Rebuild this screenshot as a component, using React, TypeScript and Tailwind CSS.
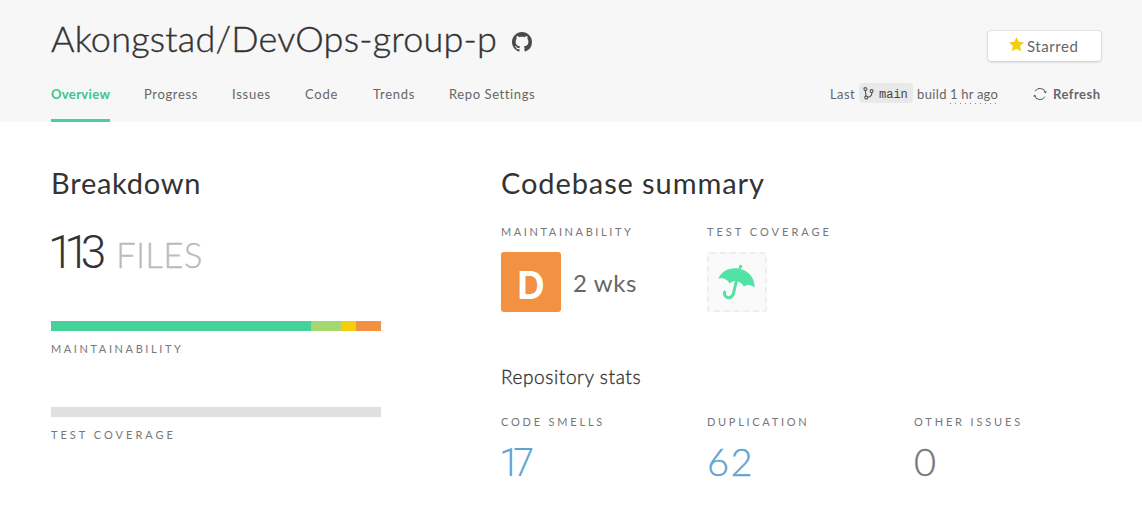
import React from "react";

const tabs = [
  { label: "Overview", active: true, spacing: "tracking-[0.35px]", width: "w-[59px]" },
  { label: "Progress", active: false, spacing: "tracking-[0.65px]", width: "w-[54px]" },
  { label: "Issues", active: false, spacing: "tracking-[0.75px]", width: "w-[39px]" },
  { label: "Code", active: false, spacing: "tracking-[0.8px]", width: "w-[34px]" },
  { label: "Trends", active: false, spacing: "tracking-[0.75px]", width: "w-[42px]" },
  { label: "Repo Settings", active: false, spacing: "tracking-[0.6px]", width: "w-[86px]" },
];

function GithubMark() {
  return (
    <svg viewBox="0 0 16 16" className="h-5 w-5" fill="#4a4a4a" aria-label="GitHub">
      <path d="M8 0C3.58 0 0 3.58 0 8c0 3.54 2.29 6.53 5.47 7.59.4.07.55-.17.55-.38 0-.19-.01-.82-.01-1.49-2.01.37-2.53-.49-2.69-.94-.09-.23-.48-.94-.82-1.13-.28-.15-.68-.52-.01-.53.63-.01 1.08.58 1.23.82.72 1.21 1.87.87 2.33.66.07-.52.28-.87.51-1.07-1.78-.2-3.64-.89-3.64-3.95 0-.87.31-1.59.82-2.15-.08-.2-.36-1.02.08-2.12 0 0 .67-.21 2.2.82.64-.18 1.32-.27 2-.27s1.36.09 2 .27c1.53-1.04 2.2-.82 2.2-.82.44 1.1.16 1.92.08 2.12.51.56.82 1.27.82 2.15 0 3.07-1.87 3.75-3.65 3.95.29.25.54.73.54 1.48 0 1.07-.01 1.93-.01 2.2 0 .21.15.46.55.38A8.01 8.01 0 0 0 16 8c0-4.42-3.58-8-8-8Z" />
    </svg>
  );
}

function BranchIcon() {
  return (
    <svg viewBox="0 0 11 13" className="h-[13px] w-[11px]" fill="none" stroke="#555" strokeWidth="1.1">
      <circle cx="2.4" cy="2.1" r="1.5" />
      <circle cx="3.2" cy="10.6" r="1.5" />
      <circle cx="8.600" cy="4.1" r="1.5" />
      <path d="M2.4 3.600l.5 5.500M8.900 5.600c0 3.400-1.900 4.400-4.300 4.700" />
    </svg>
  );
}

function RefreshIcon() {
  return (
    <svg viewBox="0 0 14 14" className="h-[14px] w-[14px]" fill="none" stroke="#555" strokeWidth="1">
      <path d="M2.100 4.300A5.600 5.600 0 0 1 12.500 5.800M11.900 9.700A5.600 5.600 0 0 1 1.500 8.200" />
      <path d="M10.600 4.600h3.300l-1.300 1.900zM.1 9.400h3.300L1.500 7.500z" fill="#555" stroke="none" />
    </svg>
  );
}

function Star() {
  return (
    <svg viewBox="0 0 14 14" className="h-[15px] w-[15px]" fill="#f3ce0b">
      <path d="M7 0l2.050 4.450 4.950.6-3.650 3.350.95 4.900L7 10.900l-4.300 2.400.95-4.900L0 5.050l4.950-.6z" />
    </svg>
  );
}

function Umbrella() {
  return (
    <svg viewBox="0 0 38 36" className="h-9 w-[38px] shrink-0" fill="#50e3a4">
      <circle cx="22.6" cy="2.4" r="1.6" />
      <path d="M21.2 3l1.9.5-.5 2.2-2-.4z" />
      <path d="M.4 14.800C3.500 7 12 3 21.500 4.800 31 6.800 37 14.500 36.600 23.800 33.800 20.600 29.600 20 25.800 22.600 24.500 19.700 21.800 17.700 18.200 17.100 15.200 16.600 13.200 17.800 11.800 19.800 9.500 15.300 5 13.400.4 14.800z" />
      <path d="M18.400 17l-3 12.700c-.7 3-3 4.500-5.600 3.900-2.700-.6-3.800-2.900-3.100-5.500" fill="none" stroke="#50e3a4" strokeWidth="3" strokeLinecap="round" />
    </svg>
  );
}

function Caption({ children, className }: { children: string; className: string }) {
  return <div className={`h-4 text-[11px] leading-4 whitespace-nowrap text-[#777] uppercase ${className}`}>{children}</div>;
}

export default function App() {
  return (
    <div className="h-[514px] w-[1142px] overflow-hidden bg-white font-['Lato','Open_Sans',sans-serif] text-[#333]">
      <header className="h-[122px] bg-[#f7f7f7] pr-[41px] pl-[51px]">
        <div className="flex h-[80px] justify-between">
          <div className="flex items-start">
            <h1 className="w-[461px] pt-[16px] text-[36px] leading-[44px] font-light tracking-[0.2px] whitespace-nowrap [-webkit-text-stroke:0.4px_#333]">
              Akongstad/DevOps-group-p
            </h1>
            <div className="pt-8">
              <GithubMark />
            </div>
          </div>
          <button className="mt-[31px] flex h-[30px] w-[113px] rounded-[3px] bg-white pl-[21px] text-[#666] shadow-[0_0_2px_rgba(0,0,0,0.2),0_1px_3px_rgba(0,0,0,0.15)]">
            <span className="mt-[6px]">
              <Star />
            </span>
            <span className="ml-[3px] text-[15px] leading-[31px] tracking-[0.55px]">Starred</span>
          </button>
        </div>
        <div className="flex h-[42px] justify-between text-[13px] leading-[28px] text-[#666]">
          <nav className="flex gap-[34px]">
            {tabs.map((t) => (
              <a
                key={t.label}
                className={`whitespace-nowrap ${t.width} ${t.spacing} ${t.active ? "border-b-[3px] border-[#45d298] font-bold text-[#3bc48c]" : ""}`}
              >
                {t.label}
              </a>
            ))}
          </nav>
          <div className="flex whitespace-nowrap">
            <span className="w-[29px] tracking-[0.4px]">Last</span>
            <span className="mt-[3px] flex h-5 w-[54px] items-center rounded-[4px] bg-[#e9e9e9] pl-[4px] font-['Liberation_Mono',monospace] text-[12px] leading-5 text-[#444]">
              <BranchIcon />
              <span className="ml-[5px] pt-[3px]">main</span>
            </span>
            <span className="ml-1 w-[33px] tracking-[0.4px]">build</span>
            <span className="h-[24px] w-[48px] bg-[repeating-linear-gradient(90deg,#888_0_1px,transparent_1px_5px)] bg-[length:100%_1px] bg-bottom bg-no-repeat tracking-[0.2px]">1 hr ago</span>
            <span className="mt-[7px] ml-[35px] w-5">
              <RefreshIcon />
            </span>
            <span className="w-[48px] font-bold tracking-[0.5px]">Refresh</span>
          </div>
        </div>
      </header>

      <main className="flex pl-[51px]">
        <section className="w-[450px] pt-[41px]">
          <h2 className="text-[29px] leading-10 tracking-[0.75px]">Breakdown</h2>
          <div className="mt-[21px] flex h-[56px] items-baseline">
            <span className="ml-[-3px] w-[68px] font-['Roboto',sans-serif] text-[46px] leading-[56px] font-light tracking-[-9.2px]">113</span>
            <span className="text-[35px] leading-[56px] font-light tracking-[0.2px] text-[#bbb] [-webkit-text-stroke:0.3px_#bbb]">FILES</span>
          </div>
          <div className="mt-[41px] flex h-[10px] w-[330px]">
            <div className="w-[260px] bg-[#45d298]" />
            <div className="w-[30px] bg-[#a4d86e]" />
            <div className="w-[15px] bg-[#f3ce0b]" />
            <div className="w-[25px] bg-[#f29141]" />
          </div>
          <Caption className="mt-[10px] tracking-[2.600px]">Maintainability</Caption>
          <div className="mt-[50px] h-[10px] w-[330px] bg-[#e0e0e0]" />
          <Caption className="mt-[10px] tracking-[3px]">Test coverage</Caption>
        </section>

        <section className="w-[620px] pt-[41px]">
          <h2 className="text-[29px] leading-10 tracking-[0.9px]">Codebase summary</h2>
          <div className="mt-[21px] flex">
            <div className="w-[206px]">
              <Caption className="tracking-[2.600px]">Maintainability</Caption>
              <div className="mt-3 flex">
                <div className="h-[60px] w-[60px] rounded-[3px] bg-[#f29141] pt-[3px] text-center font-['Inter',sans-serif] text-[38px] leading-[60px] font-bold text-white">D</div>
                <span className="ml-3 text-[24px] leading-[61px] tracking-[0.6px] text-[#666]">2 wks</span>
              </div>
            </div>
            <div>
              <Caption className="tracking-[3px]">Test coverage</Caption>
              <div className="mt-3 flex h-[60px] w-[60px] justify-center rounded-[3px] border-2 border-dashed border-[#eee] bg-[#fafafa] pt-[10px]">
                <Umbrella />
              </div>
            </div>
          </div>
          <h3 className="mt-[49px] text-[19px] leading-[30px] font-light tracking-[0.6px] [-webkit-text-stroke:0.35px_#333]">Repository stats</h3>
          <div className="mt-[22px] flex">
            <div className="w-[206px]">
              <Caption className="tracking-[2.800px]">Code smells</Caption>
              <div className="mt-[10px] ml-[-2px] font-['Roboto',sans-serif] text-[38px] leading-[46px] font-light tracking-[-7px] text-[#5fa5d2]">17</div>
            </div>
            <div className="w-[207px]">
              <Caption className="tracking-[2.700px]">Duplication</Caption>
              <div className="mt-[8px] text-[38px] leading-[46px] font-light tracking-[1.5px] text-[#5fa5d2] [-webkit-text-stroke:0.4px_#5fa5d2]">62</div>
            </div>
            <div>
              <Caption className="tracking-[2.850px]">Other issues</Caption>
              <div className="mt-[8px] text-[38px] leading-[46px] font-light text-[#777] [-webkit-text-stroke:0.4px_#777]">0</div>
            </div>
          </div>
        </section>
      </main>
    </div>
  );
}
